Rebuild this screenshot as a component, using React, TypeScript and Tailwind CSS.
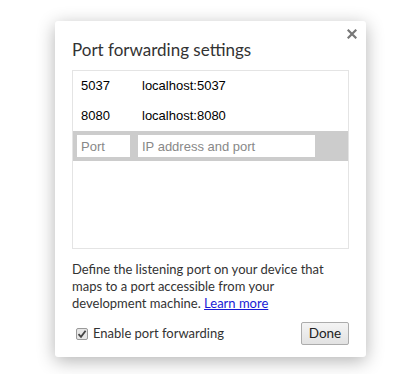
export default function App() {
  const rows = [
    { port: "5037", addr: "localhost:5037" },
    { port: "8080", addr: "localhost:8080" },
  ];

  return (
    <div className="w-[416px] h-[374px] bg-white pl-[55px] pt-[21px]">
      <div className="relative w-[311px] h-[336px] bg-white rounded-[3px] shadow-[0_4px_18px_rgba(0,0,0,0.3)] px-[17px] pt-[17px] text-[#333] font-['Lato',sans-serif]">
        {/* close */}
        <button className="absolute right-[7px] top-[6px] w-[14px] h-[14px] flex items-center justify-center">
          <svg width="10" height="10" viewBox="0 0 10 10">
            <path d="M1.5 1.5L8.5 8.5M8.5 1.5L1.5 8.5" stroke="#777" strokeWidth="2.2" strokeLinecap="square" />
          </svg>
        </button>

        <h1 className="text-[17px] leading-[24px] font-normal text-[#333]">Port forwarding settings</h1>

        {/* list */}
        <div className="mt-[8px] h-[179px] border border-[#e4e4e4] font-['Liberation_Sans',Arial,sans-serif] text-[13px] text-black">
          {rows.map((r) => (
            <div key={r.port} className="h-[30px] flex items-center pl-[8px]">
              <span className="w-[61px]">{r.port}</span>
              <span>{r.addr}</span>
            </div>
          ))}
          <div className="h-[30px] bg-[#cccccc] flex items-center pl-[4px] gap-[8px]">
            <input
              className="w-[53px] h-[22px] bg-white px-[4px] text-[13px] outline-none placeholder:text-[#888]"
              placeholder="Port"
            />
            <input
              className="w-[177px] h-[22px] bg-white px-[4px] text-[13px] outline-none placeholder:text-[#888]"
              placeholder="IP address and port"
            />
          </div>
        </div>

        <p className="mt-[12px] text-[13px] leading-[17px] text-[#333]">
          Define the listening port on your device that maps to a port accessible from your development machine.{" "}
          <a href="#" className="inline-block text-[#1a1ad6] underline">Learn more</a>
        </p>

        <div className="mt-[10px] flex items-center justify-between">
          <label className="flex items-center gap-[5px] pl-[4px] text-[13px] text-[#333]">
            <span className="w-[12px] h-[12px] border border-[#9a9a9a] rounded-[2px] bg-[#e6e6e6] flex items-center justify-center">
              <svg width="10" height="10" viewBox="0 0 10 10">
                <path d="M1.5 5.2L4 7.8L8.6 1.8" fill="none" stroke="#444" strokeWidth="1.8" />
              </svg>
            </span>
            Enable port forwarding
          </label>
          <button className="w-[48px] h-[23px] border border-[#acacac] rounded-[2px] bg-gradient-to-b from-[#f4f4f4] to-[#e2e2e2] text-[13.5px] text-[#222] leading-none">
            Done
          </button>
        </div>
      </div>
    </div>
  );
}
